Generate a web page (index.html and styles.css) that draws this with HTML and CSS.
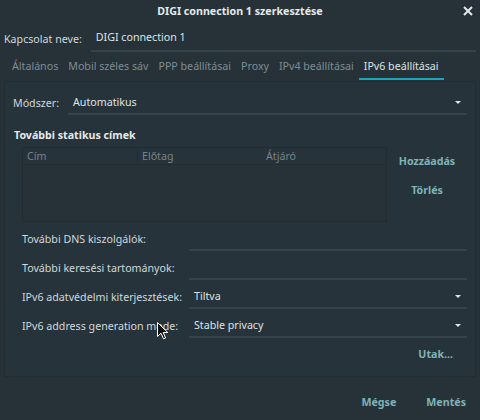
FILE: index.html
```html
<!DOCTYPE html>
<html lang="hu">
<head>
<meta charset="UTF-8">
<title>DIGI connection 1 szerkesztése</title>
<link rel="stylesheet" href="styles.css">
</head>
<body>
<div class="window">
  <div class="titlebar">
    <span class="title">DIGI connection 1 szerkesztése</span>
    <svg class="close" width="10" height="10" viewBox="0 0 10 10"><path d="M1 1L9 9M9 1L1 9" stroke="#e4eaec" stroke-width="2"/></svg>
  </div>

  <div class="namerow">
    <span class="label">Kapcsolat neve:</span>
    <div class="entry name">DIGI connection 1</div>
  </div>

  <div class="tabs">
    <div class="tab">Általános</div>
    <div class="tab">Mobil széles sáv</div>
    <div class="tab">PPP beállításai</div>
    <div class="tab">Proxy</div>
    <div class="tab">IPv4 beállításai</div>
    <div class="tab active">IPv6 beállításai</div>
  </div>

  <div class="panel">
    <div class="method">
      <span class="label">Módszer:</span>
      <div class="entry combo">Automatikus<span class="arrow"></span></div>
    </div>

    <div class="section">További statikus címek</div>
    <div class="addrs">
      <div class="table">
        <div class="thead">
          <div class="col c1">Cím</div>
          <div class="col c2">Előtag</div>
          <div class="col c3">Átjáró</div>
        </div>
      </div>
      <div class="sidebtns">
        <div class="btn">Hozzáadás</div>
        <div class="btn">Törlés</div>
      </div>
    </div>

    <div class="form">
      <span class="label">További DNS kiszolgálók:</span>
      <div class="entry"></div>
      <span class="label">További keresési tartományok:</span>
      <div class="entry"></div>
      <span class="label">IPv6 adatvédelmi kiterjesztések:</span>
      <div class="entry combo">Tiltva<span class="arrow"></span></div>
      <span class="label">IPv6 address generation mode:</span>
      <div class="entry combo">Stable privacy<span class="arrow"></span></div>
    </div>

    <div class="routes"><div class="btn">Utak...</div></div>
  </div>

  <div class="footer">
    <div class="btn">Mégse</div>
    <div class="btn">Mentés</div>
  </div>

  <svg class="cursor" width="12" height="18" viewBox="0 0 12 18"><path d="M0.5 0.5V14.5L4 11.2L6.5 16.8L8.6 15.9L6.2 10.5H10.8Z" fill="#111" stroke="#fff" stroke-width="1"/></svg>
</div>
</body>
</html>
```

FILE: styles.css
```css
html, body {
    margin: 0;
    padding: 0;
}
body {
    background: #263238;
    font-family: "Noto Sans", "DejaVu Sans", sans-serif;
    font-size: 10.67px;
    color: #cfd8dc;
}
.window {
    position: relative;
    width: 480px;
    height: 420px;
    overflow: hidden;
}
.titlebar {
    position: relative;
    height: 21px;
    display: flex;
    align-items: center;
    justify-content: center;
}
.title {
    font-weight: bold;
    color: #e4eaec;
}
.close {
    position: absolute;
    right: 7px;
    top: 6px;
}
.label {
    color: #cfd8dc;
    white-space: nowrap;
}
.entry {
    height: 22px;
    line-height: 22px;
    padding-left: 5px;
    border-bottom: 2px solid #36434a;
    color: #dde4e7;
    position: relative;
}
.arrow {
    position: absolute;
    right: 6px;
    top: 10px;
    width: 0;
    height: 0;
    border-left: 3px solid transparent;
    border-right: 3px solid transparent;
    border-top: 3px solid #dde4e7;
}
.namerow {
    display: flex;
    align-items: center;
    padding: 4px 4px 0 4px;
}
.namerow .entry {
    margin-left: 9px;
    flex: 1;
    height: 25px;
    line-height: 25px;
}
.tabs {
    display: flex;
    padding: 0 0 0 7px;
    margin-top: 3px;
    height: 25px;
}
.tab {
    padding: 0 5px;
    line-height: 23px;
    color: #7f8c93;
    border-bottom: 2px solid transparent;
}
.tab.active {
    color: #dde4e7;
    border-bottom-color: #18a6b9;
}
.panel {
    margin: 1px 4px 0 4px;
    height: 294px;
    background: #27333a;
    border: 1px solid #222c31;
    padding: 0 8px;
}
.method {
    display: flex;
    align-items: center;
    margin-top: 9px;
}
.method .entry {
    flex: 1;
    margin-left: 9px;
}
.section {
    font-weight: bold;
    color: #e4eaec;
    margin-top: 13px;
    margin-left: 1px;
}
.addrs {
    display: flex;
    margin-top: 5px;
    margin-left: 9px;
}
.table {
    width: 363px;
    height: 73px;
    background: #263238;
    border: 1px solid #222c31;
}
.thead {
    display: flex;
    height: 16px;
    line-height: 16px;
    background: #27333a;
    border-bottom: 1px solid #222c31;
}
.col {
    color: #76838a;
    padding-left: 4px;
}
.c1 {
    width: 110px;
    border-right: 1px solid #222c31;
}
.c2 {
    width: 120px;
}
.sidebtns {
    flex: 1;
    display: flex;
    flex-direction: column;
    align-items: center;
    gap: 15px;
    padding-top: 7px;
}
.btn {
    font-weight: bold;
    color: #7fb3b8;
    white-space: nowrap;
}
.form {
    display: grid;
    grid-template-columns: 167px 1fr;
    row-gap: 5px;
    align-items: center;
    margin: 5px 0 0 9px;
}
.form .entry {
    height: 22px;
}
.routes {
    display: flex;
    justify-content: flex-end;
    padding-right: 14px;
    margin-top: 9px;
}
.footer {
    display: flex;
    justify-content: flex-end;
    gap: 30px;
    padding-right: 14px;
    margin-top: 18px;
}
.cursor {
    position: absolute;
    left: 157px;
    top: 322px;
}
```
